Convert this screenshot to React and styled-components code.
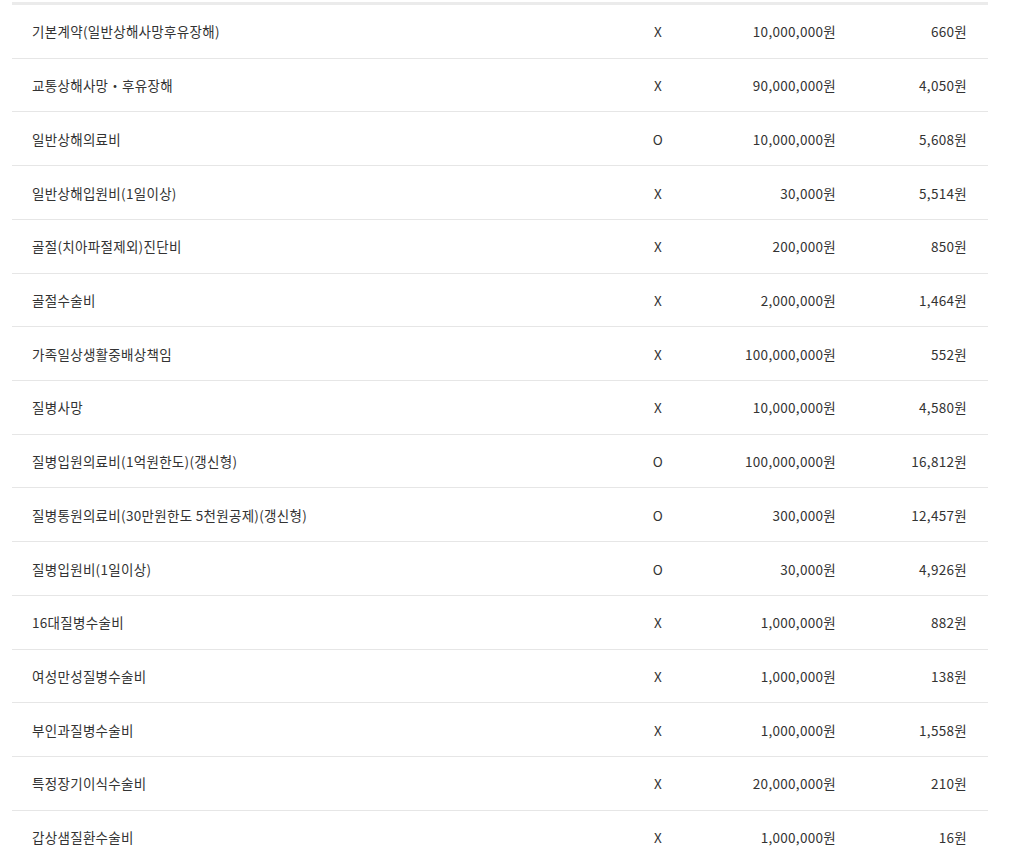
import React from "react";
import styled, { createGlobalStyle } from "styled-components";

const Global = createGlobalStyle`
  body { margin: 0; background: #fff; font-family: "Noto Sans CJK KR", "Noto Sans", sans-serif; }
`;
const Table = styled.div`
  margin: 2px 37px 0 12px;
  border-top: 3px solid #ebebeb;
`;
const Row = styled.div`
  display: grid;
  grid-template-columns: 580px 92px 132px 131px;
  align-items: center;
  height: 52.73px;
  padding: 0 21px 0 20px;
  border-bottom: 1px solid #e6e6e6;
  font-size: 13.5px;
  color: #333;
  letter-spacing: 0.3px;
`;
const Cell = styled.div`
  text-align: ${(p) => p.align || "left"};
  white-space: nowrap;
`;

const data = [
  ["기본계약(일반상해사망후유장해)", "X", "10,000,000원", "660원"],
  ["교통상해사망・후유장해", "X", "90,000,000원", "4,050원"],
  ["일반상해의료비", "O", "10,000,000원", "5,608원"],
  ["일반상해입원비(1일이상)", "X", "30,000원", "5,514원"],
  ["골절(치아파절제외)진단비", "X", "200,000원", "850원"],
  ["골절수술비", "X", "2,000,000원", "1,464원"],
  ["가족일상생활중배상책임", "X", "100,000,000원", "552원"],
  ["질병사망", "X", "10,000,000원", "4,580원"],
  ["질병입원의료비(1억원한도)(갱신형)", "O", "100,000,000원", "16,812원"],
  ["질병통원의료비(30만원한도 5천원공제)(갱신형)", "O", "300,000원", "12,457원"],
  ["질병입원비(1일이상)", "O", "30,000원", "4,926원"],
  ["16대질병수술비", "X", "1,000,000원", "882원"],
  ["여성만성질병수술비", "X", "1,000,000원", "138원"],
  ["부인과질병수술비", "X", "1,000,000원", "1,558원"],
  ["특정장기이식수술비", "X", "20,000,000원", "210원"],
  ["갑상샘질환수술비", "X", "1,000,000원", "16원"],
];

export default function App() {
  return (
    <>
      <Global />
      <Table>
        {data.map((r, i) => (
          <Row key={i}>
            <Cell>{r[0]}</Cell>
            <Cell align="center">{r[1]}</Cell>
            <Cell align="right">{r[2]}</Cell>
            <Cell align="right">{r[3]}</Cell>
          </Row>
        ))}
      </Table>
    </>
  );
}
